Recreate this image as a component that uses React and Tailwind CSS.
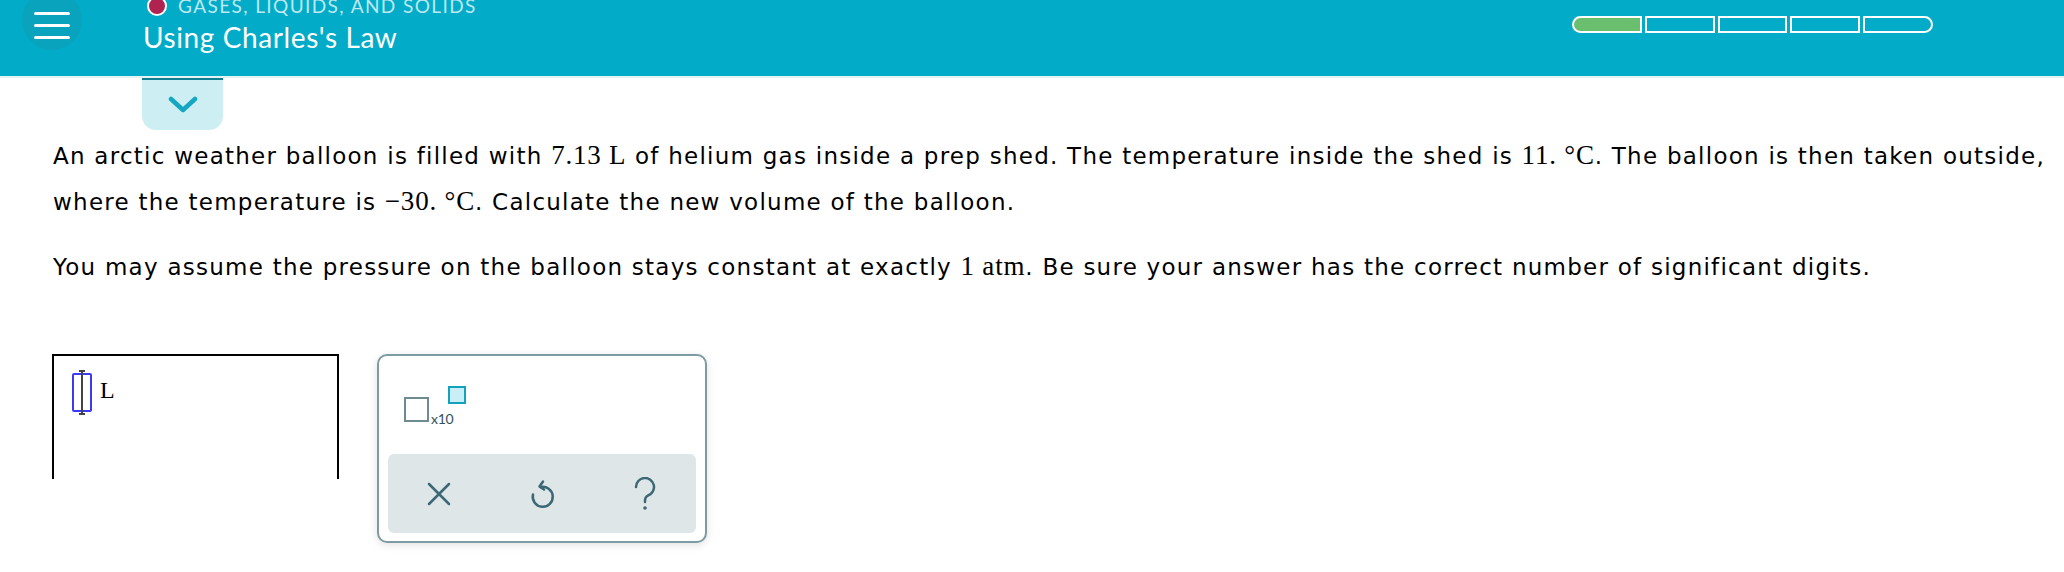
import React from 'react';

const serif = { fontFamily: '"Liberation Serif", serif' };

function M({ children }) {
    return <span className="text-[27px] leading-none tracking-[0.8px]" style={serif}>{children}</span>;
}

function Progress() {
    return (
        <div className="ml-auto mr-[131px] mt-[16px] flex gap-[3px]">
            <div className="w-[70px] h-[17px] rounded-l-full border-2 border-white bg-[#69bf6e]" />
            <div className="w-[70px] h-[17px] border-2 border-white" />
            <div className="w-[69px] h-[17px] border-2 border-white" />
            <div className="w-[70px] h-[17px] border-2 border-white" />
            <div className="w-[70px] h-[17px] rounded-r-full border-2 border-white" />
        </div>
    );
}

function App() {
    return (
        <div className="w-[2064px] h-[572px] bg-white overflow-hidden">
            {/* header */}
            <div className="h-[78px] bg-[#02acc8] flex items-start border-b-2 border-[#e6f3f5]" style={{ fontFamily: 'Lato, "Open Sans", sans-serif' }}>
                <div className="ml-[22px] -mt-[10px] w-[60px] h-[60px] rounded-full bg-[#0aa3bd] flex flex-col items-center justify-center gap-[9px] pt-[10px]">
                    <div className="w-[36px] h-[3px] rounded-full bg-white" />
                    <div className="w-[36px] h-[3px] rounded-full bg-white" />
                    <div className="w-[36px] h-[3px] rounded-full bg-white" />
                </div>
                <div className="ml-[61px] -mt-[4px] flex flex-col">
                    <div className="flex items-center h-[19px] ml-[4px]">
                        <div className="w-[20px] h-[20px] rounded-full bg-[#b0224f] border-2 border-white" />
                        <span className="ml-[11px] text-[19px] leading-[19px] text-[#bde8f0] tracking-[1.4px]">GASES, LIQUIDS, AND SOLIDS</span>
                    </div>
                    <div className="mt-[8px] text-[28px] leading-[28px] text-white tracking-[0.6px]">Using Charles's Law</div>
                </div>
                <Progress />
            </div>

            {/* toggle tab */}
            <div className="ml-[142px] w-[81px] h-[52px] bg-[#cdeef3] rounded-b-[14px] border-t-2 border-[#0c7f91] flex items-center justify-center">
                <svg width="30" height="18" viewBox="0 0 30 18" fill="none">
                    <path d="M3 3 L15 14 L27 3" stroke="#13a7c2" strokeWidth="4.5" strokeLinecap="round" strokeLinejoin="round" />
                </svg>
            </div>

            {/* question */}
            <div className="pl-[53px] mt-[3px] text-[23px] leading-[46px] tracking-[1.25px] text-black whitespace-nowrap" style={{ fontFamily: '"DejaVu Sans", Verdana, sans-serif' }}>
                <p>
                    An arctic weather balloon is filled with <M>7.13 L</M> of helium gas inside a prep shed. The temperature inside the shed is <M>11. °C</M>. The balloon is then taken outside,
                    <br />
                    where the temperature is <M>−30. °C</M>. Calculate the new volume of the balloon.
                </p>
                <p className="mt-[19px]">
                    You may assume the pressure on the balloon stays constant at exactly <M>1 atm</M>. Be sure your answer has the correct number of significant digits.
                </p>
            </div>

            {/* answer area */}
            <div className="mt-[64px] pl-[52px] flex items-start gap-[38px]">
                <div className="w-[287px] h-[125px] border-t-2 border-l-2 border-r-2 border-black pt-[17px] pl-[18px] flex items-start">
                    <div className="relative w-[20px] h-[39px] border-2 border-[#3b3bf5] rounded-[2px] flex justify-center">
                        <div className="w-[2px] h-[43px] -mt-[4px] bg-[#444]" />
                        <div className="absolute -top-[5px] left-[5px] w-[6px] h-[2px] bg-[#444]" />
                        <div className="absolute -bottom-[5px] left-[5px] w-[6px] h-[2px] bg-[#444]" />
                    </div>
                    <span className="ml-[8px] mt-[5px] text-[24px] leading-none" style={serif}>L</span>
                </div>

                <div className="w-[330px] h-[189px] rounded-[10px] border-2 border-[#7d9ba3] bg-white shadow-[0_2px_8px_rgba(0,0,0,0.12)] flex flex-col px-[9px] pb-[8px]">
                    <div className="h-[98px] flex items-start pt-[30px] pl-[16px]">
                        <div className="mt-[11px] w-[25px] h-[25px] border-2 border-[#6f8b92]" />
                        <span className="mt-[26px] ml-[2px] text-[14px] leading-none text-[#33525b] tracking-[-0.3px]" style={{ fontFamily: 'Lato, sans-serif' }}>x10</span>
                        <div className="-ml-[5px] w-[18px] h-[18px] border-[2.5px] border-[#12a2bd] bg-[#c9eef5]" />
                    </div>
                    <div className="flex-1 rounded-[6px] bg-[#dfe6e8] grid grid-cols-3 items-center">
                        <div className="flex justify-center">
                            <svg width="26" height="26" viewBox="0 0 26 26" fill="none">
                                <path d="M3 3 L23 23 M23 3 L3 23" stroke="#3b6874" strokeWidth="2.5" strokeLinecap="round" />
                            </svg>
                        </div>
                        <div className="flex justify-center">
                            <svg width="28" height="32" viewBox="0 0 28 32" fill="none">
                                <path d="M12.5 9 A10 10 0 1 1 5 16.5" stroke="#3b6874" strokeWidth="2.5" strokeLinecap="round" />
                                <path d="M15 3.5 L11.5 8.5 L16 11.5" stroke="#3b6874" strokeWidth="2.5" strokeLinecap="round" strokeLinejoin="round" />
                            </svg>
                        </div>
                        <div className="flex justify-center">
                            <svg width="24" height="34" viewBox="0 0 24 34" fill="none">
                                <path d="M3 10 A9 9 0 1 1 15 18.5 C13 19.5 12 21 12 23.5 L12 25" stroke="#3b6874" strokeWidth="2.5" strokeLinecap="round" />
                                <circle cx="12" cy="31" r="1.8" fill="#3b6874" />
                            </svg>
                        </div>
                    </div>
                </div>
            </div>
        </div>
    );
}

export default App;
